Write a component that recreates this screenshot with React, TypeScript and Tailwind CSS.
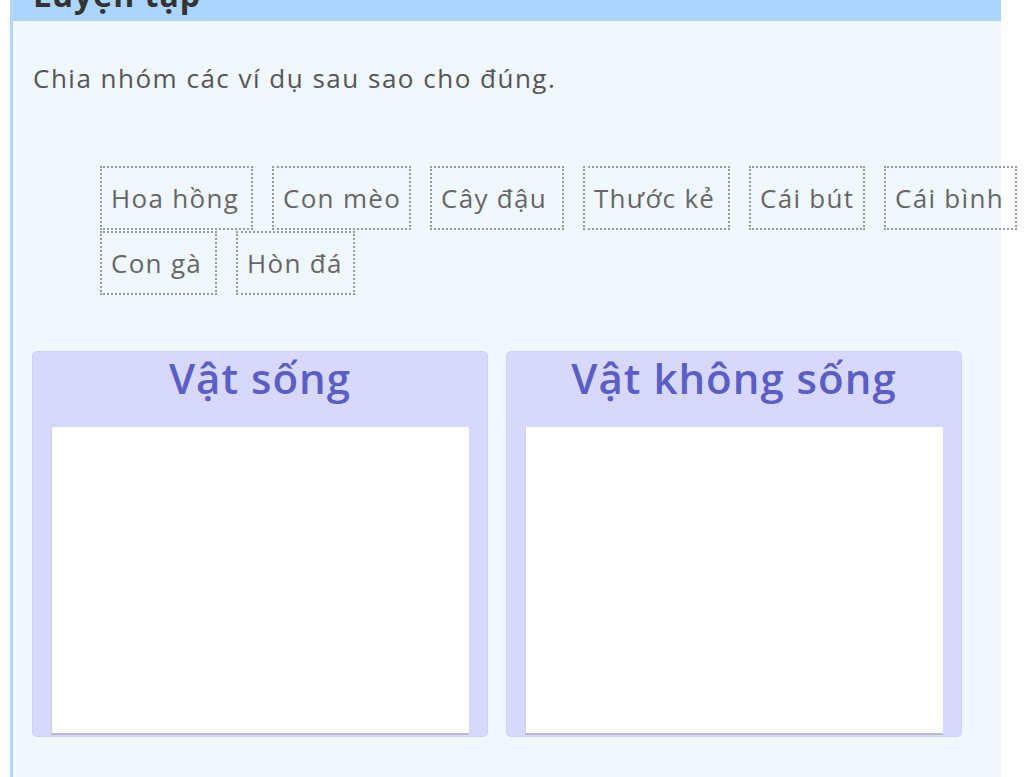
import React from "react";

const row1 = [
  { t: "Hoa hồng", w: 153 },
  { t: "Con mèo", w: 139 },
  { t: "Cây đậu", w: 134 },
  { t: "Thước kẻ", w: 147 },
  { t: "Cái bút", w: 116 },
  { t: "Cái bình", w: 133 },
];
const row2 = [
  { t: "Con gà", w: 117 },
  { t: "Hòn đá", w: 119 },
];

function Tag({ t, w }: { t: string; w: number }) {
  return (
    <div
      className="h-[64px] shrink-0 border-2 border-dotted border-[#9a9a9a] flex items-center pl-[9px] text-[26px] tracking-[1.3px] text-[#666] whitespace-nowrap"
      style={{ width: w }}
    >
      {t}
    </div>
  );
}

function Bin({ title }: { title: string }) {
  return (
    <div className="w-[456px] h-[386px] bg-[#d7d8fb] border border-[#cfd0f3] rounded-[5px] flex flex-col">
      <div className="h-[75px] flex items-center justify-center text-[42px] font-semibold tracking-[1px] text-[#5b5ec4] leading-none pb-[24px]">
        {title}
      </div>
      <div className="mx-[18px] flex-1 mb-[1px] bg-white border-l border-b-2 border-l-[#d0d0e0] border-b-[#b9bacb]" />
    </div>
  );
}

export default function App() {
  return (
    <div
      className="w-[1024px] h-[777px] overflow-hidden bg-white pl-[10px]"
      style={{ fontFamily: "'Open Sans', 'Noto Sans', sans-serif" }}
    >
      <div className="w-[991px] h-full border-l-[3px] border-[#b3d7f6] bg-[#f0f7fe] flex flex-col">
        <div className="h-[21px] bg-[#abd5fc] overflow-hidden pl-[20px]">
          <div className="-mt-[23px] text-[32px] leading-[36px] font-bold tracking-[1px] text-[#333]">Luyện tập</div>
        </div>
        <div className="pl-[20px] mt-[39px] text-[26px] tracking-[1.5px] leading-[36px] text-[#555]">
          Chia nhóm các ví dụ sau sao cho đúng.
        </div>
        <div className="ml-[87px] mt-[70px] flex flex-col">
          <div className="flex gap-[19px]">
            {row1.map((x) => (
              <Tag key={x.t} {...x} />
            ))}
          </div>
          <div className="flex gap-[19px] mt-[1px]">
            {row2.map((x) => (
              <Tag key={x.t} {...x} />
            ))}
          </div>
        </div>
        <div className="ml-[19px] mt-[56px] flex gap-[18px]">
          <Bin title="Vật sống" />
          <Bin title="Vật không sống" />
        </div>
      </div>
    </div>
  );
}
